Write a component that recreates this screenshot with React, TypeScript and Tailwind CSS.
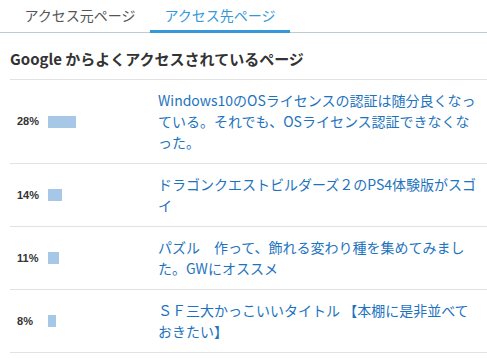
import React from "react";

const rows = [
  { pct: 28, text: "Windows10のOSライセンスの認証は随分良くなっている。それでも、OSライセンス認証できなくなった。" },
  { pct: 14, text: "ドラゴンクエストビルダーズ２のPS4体験版がスゴイ" },
  { pct: 11, text: "パズル　作って、飾れる変わり種を集めてみました。GWにオススメ" },
  { pct: 8, text: "ＳＦ三大かっこいいタイトル 【本棚に是非並べておきたい】" },
];

export default function App() {
  return (
    <div
      className="w-[487px] h-[358px] bg-white overflow-hidden"
      style={{ fontFamily: '"Noto Sans CJK JP", "Noto Sans", sans-serif' }}
    >
      <div className="flex border-b border-[#bccad3] pl-[10px]">
        <div className="w-[140px] pt-[5px] pb-[3px] border-b-[3px] border-transparent text-center text-[14px] leading-[21px] text-[#555]">
          アクセス元ページ
        </div>
        <div className="w-[140px] pt-[5px] pb-[3px] border-b-[3px] border-[#3498db] text-center text-[14px] leading-[21px] text-[#3498db] -mb-px">
          アクセス先ページ
        </div>
      </div>
      <div className="pl-[10px]">
        <div className="pt-[15px] pb-[9px] border-b border-[#e2e2e2] text-[15px] leading-[22px] font-bold text-[#333]">
          Google からよくアクセスされているページ
        </div>
        {rows.map((r) => (
          <div key={r.pct} className="flex border-b border-[#e2e2e2]">
            <div className="w-[148px] flex items-center pl-[7px] shrink-0">
              <span
                className="w-[31px] text-[11px] font-bold text-[#333]"
                style={{ fontFamily: '"Liberation Sans", Arial, sans-serif' }}
              >
                {r.pct}%
              </span>
              <span className="h-[12px] bg-[#a7c7e7]" style={{ width: `${r.pct}px` }} />
            </div>
            <div className="w-[321px] py-[10px] text-[14px] leading-[21px] text-[#1e73be]">
              {r.text}
            </div>
          </div>
        ))}
      </div>
    </div>
  );
}
